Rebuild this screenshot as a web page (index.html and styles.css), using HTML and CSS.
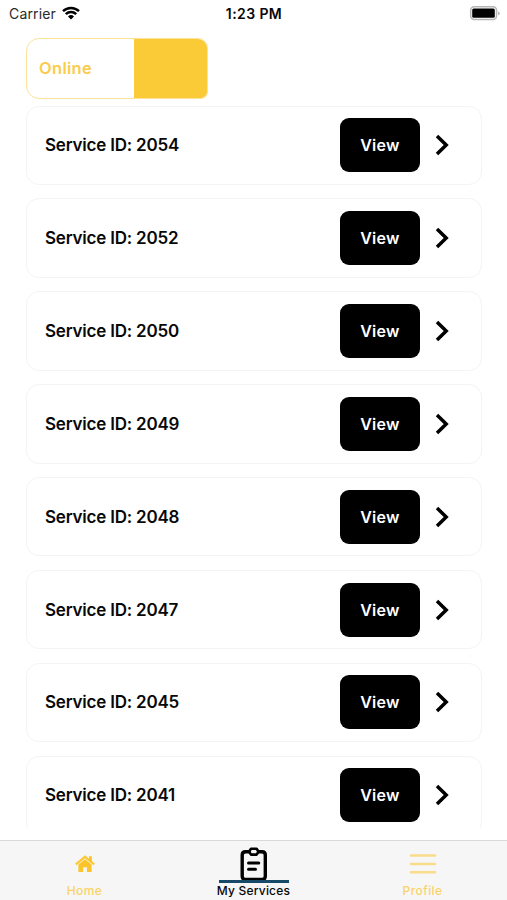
FILE: index.html
```html
<!DOCTYPE html>
<html lang="en">
<head>
<meta charset="utf-8">
<title>My Services</title>
<link rel="stylesheet" href="styles.css">
</head>
<body>
<div class="screen">
  <header class="status">
    <div class="carrier"><span>Carrier</span>
      <svg width="20" height="16" viewBox="0 0 20 16"><path d="M2 6.1A11.6 11.6 0 0 1 18 6.1M4.8 9.1A7.6 7.6 0 0 1 15.2 9.1" fill="none" stroke="#000" stroke-width="2.5"/><path d="M7 11.5A4.4 4.4 0 0 1 13 11.5L10 14.6Z"/></svg>
    </div>
    <div class="time">1:23 PM</div>
    <svg class="battery" width="32" height="16" viewBox="0 0 32 16"><rect x="1.7" y=".8" width="25.8" height="12.8" rx="3.5" fill="#fff" stroke="#b5b5b5" stroke-width="1.5"/><rect x="3.2" y="2.4" width="22.6" height="9.4" rx="1.5"/><path d="M29.2 5.2Q32.2 7.4 29.2 9.6Z" fill="#aaa"/></svg>
  </header>
  <div class="toggle"><div class="toggle-label"><span>Online</span></div><div class="toggle-thumb"></div></div>
  <main class="list"></main>
  <nav class="tabs">
    <div class="tab home">
      <svg width="20" height="18" viewBox="0 0 20 18"><path d="M.8 9.4 10 1.8l9.2 7.6" fill="none" stroke="#fbc936" stroke-width="2.2"/><path d="M14 1.2h2.8v6.3L14 5.2ZM3.4 9.6 10 4.2l6.6 5.4V17h-4.7v-4.7H8.1V17H3.4Z" fill="#fbc42a"/></svg>
      <span>Home</span>
    </div>
    <div class="tab active">
      <svg width="28" height="35" viewBox="0 0 28 35"><g fill="none" stroke="#000" stroke-width="3.4" stroke-linecap="round" stroke-linejoin="round"><path d="M9 4.7H5.5Q2.2 4.7 2.2 8V29.2Q2.2 32.5 5.5 32.5H22Q25.3 32.5 25.3 29.2V8Q25.3 4.7 22 4.7H18.5"/><path d="M11 1.8h5.6l2 2.9-2 2.9H11L9 4.7Z" stroke-width="2.6"/><path d="M8.5 16h10.3M8.5 22.3h7" stroke-width="3"/></g></svg>
      <i class="indicator"></i>
      <span>My Services</span>
    </div>
    <div class="tab profile">
      <svg width="28" height="22" viewBox="0 0 28 22"><path d="M2 2.5h24M2 11h24M2 19.2h24" fill="none" stroke="#f9dc8a" stroke-width="2.6" stroke-linecap="round"/></svg>
      <span>Profile</span>
    </div>
  </nav>
</div>
<script src="app.js"></script>
</body>
</html>
```
FILE: styles.css
```css
* { box-sizing: border-box; }
body { margin: 0; background: #fff; font-family: Inter, "Liberation Sans", sans-serif; color: #080808; }
svg { display: block; flex: none; }
.screen { width: 507px; height: 900px; display: flex; flex-direction: column; overflow: hidden; }
.status { height: 38px; flex: none; display: grid; grid-template-columns: 1fr auto 1fr; align-items: start; padding: 5px 6px 0 9px; font-size: 14px; line-height: 18px; }
.carrier { display: flex; gap: 5px; color: #292929; letter-spacing: .15px; }
.time { font-size: 14px; font-weight: 600; letter-spacing: .4px; margin-right: 2px; }
.battery { justify-self: end; margin-top: 1px; }
.toggle { width: 182.5px; height: 60.5px; flex: none; margin-left: 25.5px; border: 1.5px solid #fce39a; border-radius: 13px 10px 7px 13px; display: flex; overflow: hidden; }
.toggle-label { width: 107.5px; padding: 0 0 1px 12.5px; display: flex; align-items: center; color: #f9cd4c; font-size: 16.5px; font-weight: 600; letter-spacing: .3px; }
.toggle-thumb { flex: 1; background: #fbca37; }
.list { height: 729.5px; flex: none; padding: 7px 25px 0 25.5px; display: flex; flex-direction: column; gap: 13.36px; overflow: hidden; }
.card { height: 79.5px; flex: none; display: flex; align-items: center; border: 1.5px solid #f4f4f4; border-radius: 13px; padding: 0 30.5px 0 18.5px; }
.title { flex: 1; font-size: 17px; font-weight: 600; letter-spacing: -.2px; }
.view { width: 80px; height: 54px; border: 0; border-radius: 9px; padding: 0; background: #000; color: #fff; font: 600 16px Inter, sans-serif; letter-spacing: .3px; }
.chevron { margin-left: 13.5px; }
.tabs { flex: none; height: 60px; margin-top: 12px; background: #f6f6f6; border-top: 1px solid #d9d9d9; display: grid; grid-template-columns: repeat(3, 1fr); }
.tab { display: flex; flex-direction: column; align-items: center; font-size: 12px; font-weight: 500; line-height: 16px; letter-spacing: .4px; white-space: nowrap; }
.home, .profile { color: #fad368; }
.home svg { margin: 14px 0 10px; }
.active { letter-spacing: .2px; }
.active svg { margin-top: 6px; }
.indicator { width: 70px; height: 3px; margin-top: -2px; background: #164a68; }
.profile svg { margin: 12px 0 8px; }
```
FILE: app.js
```js
const ids = [2054, 2052, 2050, 2049, 2048, 2047, 2045, 2041];
document.querySelector('.list').innerHTML = ids.map(id => `
  <article class="card">
    <span class="title">Service ID: ${id}</span>
    <button class="view">View</button>
    <svg class="chevron" width="17" height="24" viewBox="0 0 17 24"><path d="M3 3l9.2 9L3 21" fill="none" stroke="#000" stroke-width="3.5"/></svg>
  </article>`).join('');
```
